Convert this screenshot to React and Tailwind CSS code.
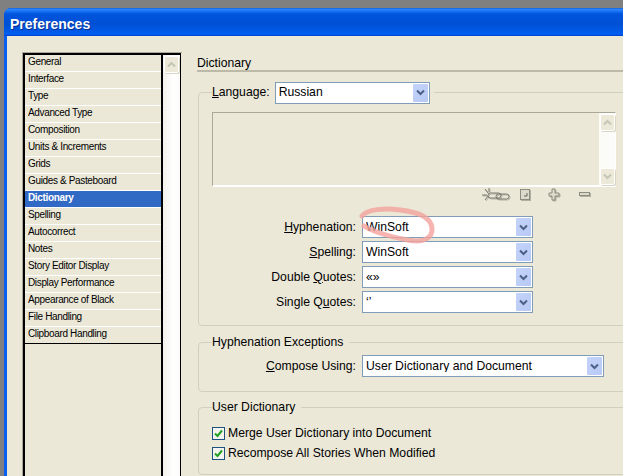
const FONT = "font-['Liberation_Sans',sans-serif]";

function Chevron({ color = "#4d6185", up = false }) {
  return (
    <svg width="9" height="7" viewBox="0 0 9 7" className={up ? "rotate-180" : ""}>
      <path d="M1 1.5 L4.5 5 L8 1.5" fill="none" stroke={color} strokeWidth="2" />
    </svg>
  );
}

function Select({ value, width = "w-[171px]" }) {
  return (
    <div className={`${width} h-[22px] shrink-0 flex items-center bg-white border border-[#7f9db9] pl-[3px] pr-px text-[12.2px] text-black`}>
      <span className="flex-1 leading-none truncate">{value}</span>
      <span className="w-[15px] h-[18px] flex items-center justify-center rounded-[1px] bg-[linear-gradient(135deg,#c4d3f9,#b7c9f5)]">
        <Chevron />
      </span>
    </div>
  );
}

function Label({ pre = "", u, post, width = "w-[144px]" }) {
  return (
    <span className={`${width} shrink-0 text-right text-[12.2px] text-black`}>
      {pre}<span className="underline underline-offset-1">{u}</span>{post}
    </span>
  );
}

function Row({ label, value, width, labelWidth }) {
  return (
    <div className="flex items-center gap-[6px]">
      <Label {...label} width={labelWidth} />
      <Select value={value} width={width} />
    </div>
  );
}

function ScrollBtn({ up }) {
  return (
    <div className="w-[15px] h-[17px] mx-auto rounded-[2px] border border-white bg-[#ece9d8] shadow-[1px_1px_0_#d9d6c6] flex items-center justify-center">
      <Chevron color="#c6c6b6" up={up} />
    </div>
  );
}

function Check({ label }) {
  return (
    <div className="flex items-center gap-[3px] h-[20px] text-[12.2px] text-black">
      <span className="w-[13px] h-[13px] border border-[#1c5180] bg-[#f4f3ee] flex items-center justify-center">
        <svg width="9" height="9" viewBox="0 0 9 9">
          <path d="M1 4.5 L3.5 7 L8 1.5" fill="none" stroke="#21a121" strokeWidth="2" />
        </svg>
      </span>
      <span>{label}</span>
    </div>
  );
}

const items = ["General","Interface","Type","Advanced Type","Composition","Units & Increments","Grids","Guides & Pasteboard","Dictionary","Spelling","Autocorrect","Notes","Story Editor Display","Display Performance","Appearance of Black","File Handling","Clipboard Handling"];

function Sidebar() {
  return (
    <div className="w-[160px] h-[440px] shrink-0 flex border-t border-l border-[#aca899] border-r-0">
      <div className="w-[140px] flex flex-col border-l-2 border-t-2 border-r-2 border-black">
        {items.map((it, i) => (
          <div
            key={it}
            className={`h-[17px] shrink-0 pl-[3px] pb-[3px] flex items-center text-[10px] tracking-[-0.35px] border-b ${i === items.length - 1 ? "border-black" : "border-white"} ${it === "Dictionary" ? "bg-[#316ac5] text-white font-bold" : "text-black"}`}
          >
            {it}
          </div>
        ))}
      </div>
      <div className="w-[17px] pt-[1px] border-t-2 border-black bg-[linear-gradient(90deg,#f3f2ec,#ffffff_60%,#fbfbf8)]">
        <ScrollBtn up />
      </div>
      <div className="w-px bg-black" />
    </div>
  );
}

function Icons() {
  return (
    <div className="h-[29px] flex items-center pb-[13px] pl-[268px] gap-0">
      <svg width="120" height="16" viewBox="0 0 120 16" fill="none" className="drop-shadow-[1px_1px_0.5px_rgba(120,120,105,0.5)]">
        <g stroke="#77776b" strokeWidth="1">
          <path d="M2 8 H7 M5 2 L8 6 M5 13 L8 9 M9 1 V5" />
          <rect x="8" y="6" width="13" height="5" rx="2.5" />
          <rect x="16" y="7" width="13" height="5" rx="2.5" />
        </g>
        <g stroke="#8c8c7e" fill="#dcdacb">
          <rect x="40.5" y="2.5" width="9" height="10" />
          <path d="M44 9 H47 V6" fill="none" stroke="#66665c" />
        </g>
        <path d="M69 6 H72 V2 H75 V6 H79 V9 H75 V13 H72 V9 H69 Z" fill="#dcdacb" stroke="#8c8c7e" />
        <rect x="99.5" y="5.5" width="10" height="3" fill="#dcdacb" stroke="#8c8c7e" />
      </svg>
    </div>
  );
}

export default function App() {
  return (
    <div className={`relative w-[623px] h-[476px] overflow-hidden bg-[#808080] pt-2 pl-1 ${FONT}`}>
      <div className="w-[640px] h-[480px] rounded-tl-[7px] overflow-hidden flex flex-col bg-[#0a5ff0]">
        <div className="h-[28px] shrink-0 pl-[6px] pt-[4px] flex items-center bg-[linear-gradient(180deg,#0a4fd0_0px,#2b8bff_1px,#1b75f5_3px,#0055dd_6px,#0050d4_16px,#005ae8_24px,#0060f5_26px,#0040c8_28px)]">
          <span className="text-white font-bold text-[14px] [text-shadow:1px_1px_0_#0a2f90]">Preferences</span>
        </div>
        <div className="flex-1 ml-[3px] bg-[#ebe8d8] flex pl-[15px] pt-[16px]">
          <Sidebar />
          <div className="w-[440px] shrink-0 ml-[15px]">
            <div className="h-[20px] flex items-end pb-[1px] border-b-2 border-b-[#bdb9a8] text-[12.2px] text-black leading-none">
              Dictionary
            </div>
            <fieldset className="ml-px mt-[10px] border border-[#d0d0bf] rounded-[4px] pl-[13px] h-[244px] flex-col">
              <legend className="flex items-center gap-[5px] pr-1 h-[21px]">
                <Label u="L" post="anguage:" width="w-auto" />
                <Select value="Russian" width="w-[155px]" />
              </legend>
              <div className="w-[404px] h-[75px] mt-[9px] flex justify-end border-t border-l border-[#aca899] border-b-2 border-b-white border-r border-r-white">
                <div className="w-[16px] h-full pt-px flex flex-col justify-between bg-[#fbfbf8]">
                  <ScrollBtn up />
                  <ScrollBtn />
                </div>
              </div>
              <Icons />
              <div className="flex flex-col gap-[3px]">
                <Row label={{ u: "H", post: "yphenation:" }} value="WinSoft" />
                <Row label={{ u: "S", post: "pelling:" }} value="WinSoft" />
                <Row label={{ pre: "Double ", u: "Q", post: "uotes:" }} value="«»" />
                <Row label={{ pre: "Single Q", u: "u", post: "otes:" }} value="‘’" />
              </div>
            </fieldset>
            <fieldset className="ml-px mt-[8px] border border-[#d0d0bf] rounded-[4px] pl-[13px] h-[58px]">
              <legend className="pr-[6px] h-[17px] flex items-center text-[12.2px] text-black">Hyphenation Exceptions</legend>
              <div className="mt-[4px]">
                <Row label={{ u: "C", post: "ompose Using:" }} value="User Dictionary and Document" width="w-[242px]" />
              </div>
            </fieldset>
            <fieldset className="ml-px mt-[7px] border border-[#d0d0bf] rounded-[4px] pl-[13px] h-[76px]">
              <legend className="pr-[6px] h-[17px] flex items-center text-[12.2px] text-black">User Dictionary</legend>
              <div className="mt-[7px]">
                <Check label="Merge User Dictionary into Document" />
                <Check label="Recompose All Stories When Modified" />
              </div>
            </fieldset>
          </div>
        </div>
      </div>
      <svg className="absolute inset-0 pointer-events-none blur-[0.5px]" width="623" height="476" viewBox="0 0 623 476" fill="none">
        <path
          d="M362 216 C367 209 385 208 400 210 C418 212 431 217 432 228 C433 239 422 243 408 240 C392 237 375 233 364 226"
          stroke="#f4a29c"
          strokeOpacity="0.8"
          strokeWidth="5"
          strokeLinecap="round"
        />
      </svg>
    </div>
  );
}
